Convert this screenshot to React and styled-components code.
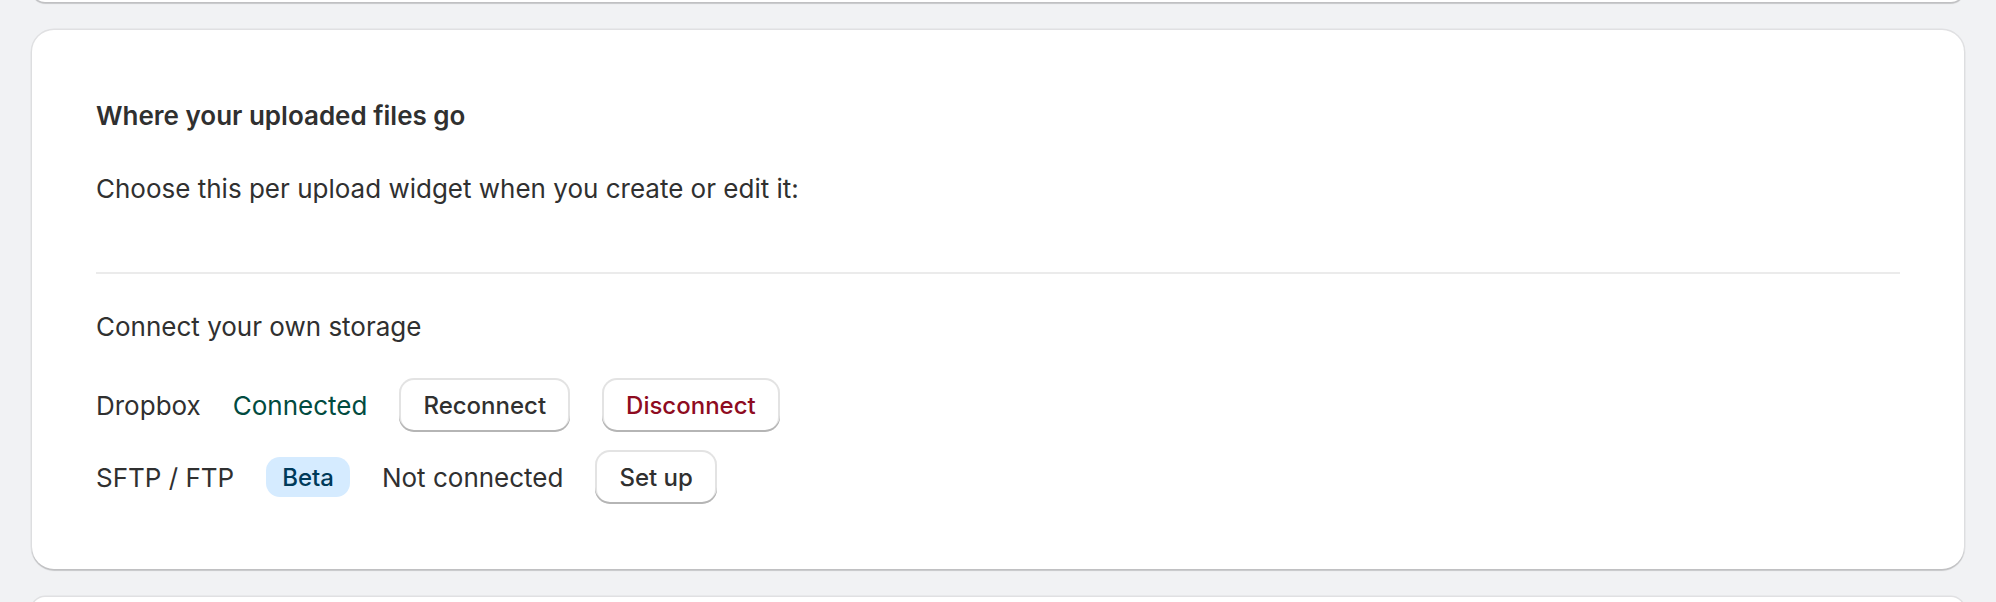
import React from 'react'
import styled, { createGlobalStyle } from 'styled-components'

const GlobalStyle = createGlobalStyle`
  html, body {
    margin: 0;
    padding: 0;
    background: #f1f2f4;
  }
  body {
    font-family: Inter, "Noto Sans", "Liberation Sans", sans-serif;
    color: #303030;
    -webkit-font-smoothing: antialiased;
  }
`

const Page = styled.div`
  padding: 0 32px;
  height: 602px;
  overflow: hidden;
`

const Stack = styled.div`
  display: flex;
  flex-direction: column;
  gap: 28px;
  margin-top: -24px;
`

const Card = styled.section`
  background: #fff;
  border-radius: 22px;
  box-shadow: 0 0 0 1.5px rgba(0, 0, 0, 0.07), 0 2px 1px 0 rgba(0, 0, 0, 0.14);
  padding: ${(p) => (p.$stub ? '0' : '67px 64px 65px')};
  height: ${(p) => (p.$stub ? '26px' : 'auto')};
  flex-shrink: 0;
`

const Heading = styled.h2`
  margin: 0;
  font-size: 26px;
  line-height: 37px;
  font-weight: 600;
`

const Text = styled.p`
  margin: ${(p) => p.$mt || '0'} 0 0;
  font-size: 26px;
  line-height: 37px;
  font-weight: 400;
`

const Divider = styled.hr`
  margin: 65px 0 0;
  border: 0;
  height: 2px;
  background: #ebebeb;
`

const Rows = styled.div`
  display: flex;
  flex-direction: column;
  gap: 18px;
  margin-top: 33px;
`

const Row = styled.div`
  display: flex;
  align-items: center;
  gap: 32px;
  min-height: 54px;
`

const Label = styled.span`
  font-size: 26px;
  line-height: 37px;
  color: ${(p) => p.$color || '#303030'};
`

const Badge = styled.span`
  display: inline-flex;
  align-items: center;
  height: 40px;
  padding: 0 16px;
  border-radius: 14px;
  background: #d5ebff;
  color: #003a5a;
  font-size: 24px;
  font-weight: 550;
`

const Button = styled.button`
  height: 54px;
  padding: 0 24px;
  border: 0;
  border-radius: 15px;
  background: #fff;
  box-shadow: inset 0 -2px 0 0 #b5b5b5, inset 0 0 0 2px #e3e3e3;
  font-family: inherit;
  font-size: 24px;
  font-weight: 550;
  color: ${(p) => (p.$critical ? '#8e0b21' : '#303030')};
  cursor: pointer;
`

export default function App() {
  return (
    <>
      <GlobalStyle />
      <Page>
        <Stack>
          <Card $stub />
          <Card>
            <Heading>Where your uploaded files go</Heading>
            <Text $mt='36px'>Choose this per upload widget when you create or edit it:</Text>
            <Divider />
            <Text $mt='34px'>Connect your own storage</Text>
            <Rows>
              <Row>
                <Label>Dropbox</Label>
                <Label $color='#014b40'>Connected</Label>
                <Button>Reconnect</Button>
                <Button $critical>Disconnect</Button>
              </Row>
              <Row>
                <Label>SFTP / FTP</Label>
                <Badge>Beta</Badge>
                <Label>Not connected</Label>
                <Button>Set up</Button>
              </Row>
            </Rows>
          </Card>
          <Card $stub />
        </Stack>
      </Page>
    </>
  )
}
